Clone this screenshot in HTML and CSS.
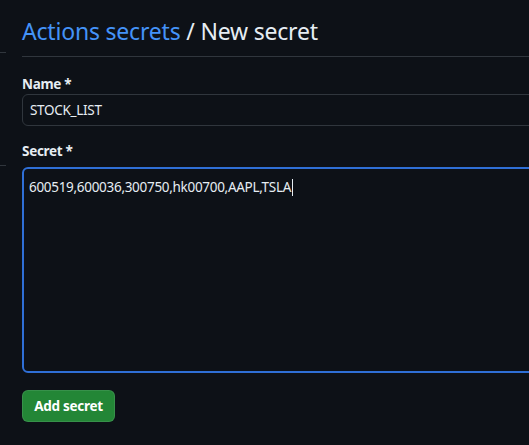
FILE: index.html
```html
<!DOCTYPE html>
<html lang="en">
<head>
<meta charset="utf-8">
<title>New secret</title>
<link rel="stylesheet" href="styles.css">
</head>
<body>
<div class="layout">
  <aside class="sidebar">
    <div class="side-line first"></div>
    <div class="side-line second"></div>
  </aside>
  <main class="content">
    <div class="subhead">
      <h2 class="subhead-heading"><a class="crumb" href="#">Actions secrets</a> / New secret</h2>
    </div>
    <form class="secret-form">
      <div class="form-group">
        <label class="form-label">Name *</label>
        <div class="form-input">STOCK_LIST</div>
      </div>
      <div class="form-group">
        <label class="form-label">Secret *</label>
        <div class="form-textarea">600519,600036,300750,hk00700,AAPL,TSLA<span class="caret"></span></div>
      </div>
      <button type="button" class="btn-primary">Add secret</button>
    </form>
  </main>
</div>
</body>
</html>
```

FILE: styles.css
```css
html, body {
  margin: 0;
  padding: 0;
  background: #0d1117;
  overflow: hidden;
}
body {
  font-family: "Noto Sans", "Open Sans", sans-serif;
  color: #e6edf3;
  font-size: 14px;
}
.layout {
  display: flex;
  width: 600px;
}
.sidebar {
  width: 6px;
  flex-shrink: 0;
  display: flex;
  flex-direction: column;
}
.side-line {
  height: 1px;
  background: #30363d;
}
.side-line.first { margin-top: 52px; }
.side-line.second { margin-top: 112px; }
.content {
  margin-left: 16px;
  flex: 1;
}
.subhead {
  border-bottom: 1px solid #30363d;
  padding-top: 13px;
  padding-bottom: 7px;
}
.subhead-heading {
  margin: 0;
  font-size: 23px;
  letter-spacing: -0.2px;
  font-weight: 400;
  line-height: 36px;
  color: #e6edf3;
}
.crumb {
  color: #4493f8;
  text-decoration: none;
}
.secret-form {
  display: flex;
  flex-direction: column;
  padding-top: 17px;
}
.form-group {
  display: flex;
  flex-direction: column;
  margin-bottom: 15px;
}
.form-group:last-of-type {
  margin-bottom: 17px;
}
.form-label {
  font-weight: 700;
  font-size: 13.5px;
  letter-spacing: -0.3px;
  line-height: 20px;
}
.form-input {
  height: 32px;
  box-sizing: border-box;
  border: 1px solid #30363d;
  border-radius: 6px;
  padding: 0 7px;
  line-height: 30px;
  font-size: 13.5px;
  letter-spacing: -0.3px;
}
.form-textarea {
  margin-top: 6px;
  height: 206px;
  box-sizing: border-box;
  border: 2px solid #2f6fd6;
  border-radius: 6px;
  padding: 8px 5px;
  line-height: 20px;
  font-size: 13.5px;
  letter-spacing: -0.3px;
}
.caret {
  display: inline-block;
  width: 1px;
  height: 17px;
  margin-left: 1px;
  background: #e6edf3;
  vertical-align: -4px;
}
.btn-primary {
  align-self: flex-start;
  width: 93px;
  height: 32px;
  border: 1px solid rgba(240, 246, 252, 0.1);
  border-radius: 6px;
  background: #238636;
  color: #ffffff;
  font-family: "Noto Sans", "Open Sans", sans-serif;
  font-weight: 700;
  font-size: 13.5px;
  letter-spacing: -0.3px;
  padding: 0;
  margin: 0;
}
```
